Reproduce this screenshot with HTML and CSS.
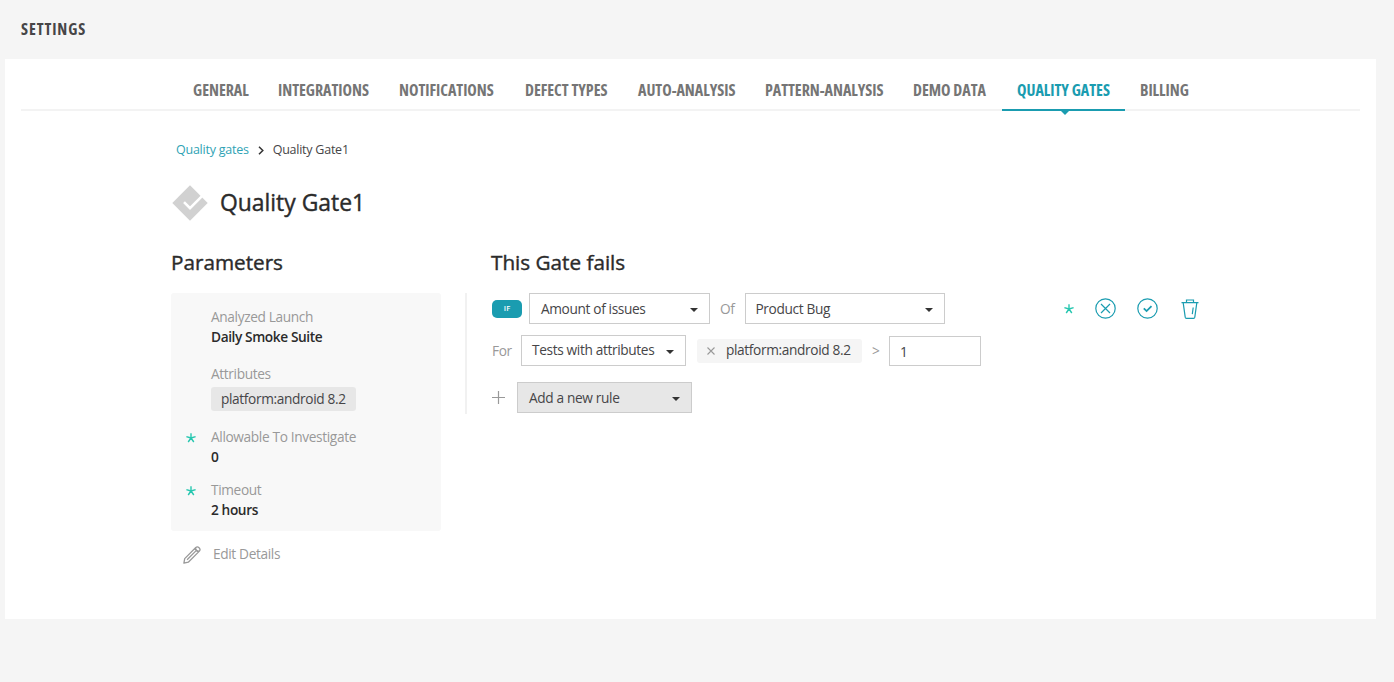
FILE: index.html
```html
<!DOCTYPE html>
<html lang="en">
<head>
<meta charset="utf-8">
<title>Settings</title>
<link rel="stylesheet" href="styles.css">
</head>
<body>
<header class="header">SETTINGS</header>
<main class="panel">
  <nav class="tabs">
    <a class="tab w-general"><span>GENERAL</span></a>
    <a class="tab w-integrations"><span>INTEGRATIONS</span></a>
    <a class="tab w-notifications"><span>NOTIFICATIONS</span></a>
    <a class="tab w-defects"><span>DEFECT TYPES</span></a>
    <a class="tab w-auto"><span>AUTO-ANALYSIS</span></a>
    <a class="tab w-pattern"><span>PATTERN-ANALYSIS</span></a>
    <a class="tab w-demo"><span>DEMO DATA</span></a>
    <a class="tab w-gates active"><span>QUALITY GATES</span></a>
    <a class="tab w-billing"><span>BILLING</span></a>
  </nav>
  <div class="content">
    <div class="crumbs">
      <a class="crumb-link">Quality gates</a>
      <svg class="crumb-arrow" width="6" height="9" viewBox="0 0 6 9"><path d="M1 .8 4.8 4.5 1 8.2" fill="none" stroke="#333" stroke-width="1.5"/></svg>
      <span>Quality Gate1</span>
    </div>
    <div class="title-row">
      <svg width="36" height="36" viewBox="0 0 36 36"><path d="M18 .3 35.7 18 18 35.7.3 18Z" fill="#d1d1d1"/><path d="M12 17.2 18 23.2 30.5 10.700" fill="none" stroke="#fff" stroke-width="2.600"/></svg>
      <h1>Quality Gate1</h1>
    </div>
    <div class="columns">
      <section class="params">
        <h2>Parameters</h2>
        <div class="card">
          <div class="param"><div class="label">Analyzed Launch</div><div class="value">Daily Smoke Suite</div></div>
          <div class="param attrs"><div class="label">Attributes</div><span class="chip">platform:android 8.2</span></div>
          <div class="param invest"><svg class="star" width="10" height="10" viewBox="0 0 10 10"><path d="M5 5V.2M5 5 .4 3.600M5 5 9.600 3.600M5 5 2.200 9M5 5 7.800 9"/></svg><div class="label">Allowable To Investigate</div><div class="value">0</div></div>
          <div class="param timeout"><svg class="star" width="10" height="10" viewBox="0 0 10 10"><path d="M5 5V.2M5 5 .4 3.600M5 5 9.600 3.600M5 5 2.200 9M5 5 7.800 9"/></svg><div class="label">Timeout</div><div class="value">2 hours</div></div>
        </div>
        <div class="edit">
          <svg width="18" height="18" viewBox="0 0 18 18" fill="none" stroke="#999" stroke-width="1.300" stroke-linejoin="round"><path d="M.9 17.100 1.700 12.600 12.800 1.500C14.800-.3 18.300 2.800 16.400 5.100L5.300 16.200ZM11.600 2.700 15.200 6.300M12.800 1.500C12.100 3.500 14.300 5.800 16.400 5.100M4.100 13.700 13.400 4.400"/></svg>
          <span>Edit Details</span>
        </div>
      </section>
      <section class="gate">
        <h2>This Gate fails</h2>
        <div class="rules">
          <div class="row first">
            <span class="if">IF</span>
            <div class="select amount"><span>Amount of issues</span><i class="caret"></i></div>
            <span class="word of">Of</span>
            <div class="select product"><span>Product Bug</span><i class="caret"></i></div>
            <div class="actions">
              <svg class="star" width="10" height="10" viewBox="0 0 10 10"><path d="M5 5V.2M5 5 .4 3.600M5 5 9.600 3.600M5 5 2.200 9M5 5 7.800 9"/></svg>
              <svg class="act cancel" width="21" height="21" viewBox="0 0 21 21"><circle cx="10.500" cy="10.500" r="9.700"/><path d="M6 6l9 9M15 6l-9 9"/></svg>
              <svg class="act ok" width="21" height="21" viewBox="0 0 21 21"><circle cx="10.500" cy="10.500" r="9.700"/><path d="M6.800 10.300 9.600 13.100 14.500 8.200" stroke-width="1.800"/></svg>
              <svg class="act trash" width="18" height="20" viewBox="0 0 18 20"><path d="M.5 3.700H17.500M5.500 3.500V1H12.500V3.500M2.200 3.900 4.200 18.200Q4.400 19.300 5.400 19.300H12.600Q13.600 19.300 13.800 18.200L15.800 3.900M12.200 8.500 11.300 15.200"/></svg>
            </div>
          </div>
          <div class="row second">
            <span class="word for">For</span>
            <div class="select tests"><span>Tests with attributes</span><i class="caret"></i></div>
            <div class="tag"><svg width="8" height="8" viewBox="0 0 8 8"><path d="M.5.5l7 7M7.500.5l-7 7" stroke="#999" stroke-width="1.100"/></svg><span>platform:android 8.2</span></div>
            <span class="gt">&gt;</span>
            <div class="number">1</div>
          </div>
          <div class="row third">
            <svg width="13" height="13" viewBox="0 0 13 13"><path d="M6.500 0v13M0 6.500h13" stroke="#999" stroke-width="1.200"/></svg>
            <div class="select add"><span>Add a new rule</span><i class="caret"></i></div>
          </div>
        </div>
      </section>
    </div>
  </div>
</main>
</body>
</html>
```

FILE: styles.css
```css
* { box-sizing: border-box; }
body { margin: 0; height: 682px; background: #f5f5f5; color: #464547; font: 13.7px/20px "Open Sans", sans-serif; letter-spacing: -0.36px; overflow: hidden; }
h1, h2 { margin: 0; font-weight: 400; letter-spacing: 0; color: #2b2b2b; -webkit-text-stroke: 0.4px #2b2b2b; }
svg { display: block; flex: none; }
.header { height: 59px; padding: 19px 0 0 21px; font-size: 16px; line-height: 21px; font-weight: 700; font-stretch: 75%; letter-spacing: 0.9px; }
.panel { width: 1371px; height: 560px; margin-left: 5px; padding: 0 16px; background: #fff; }
.tabs { display: flex; height: 52px; padding: 16px 0 0 157px; border-bottom: 2px solid #f3f3f3; }
.tab { position: relative; flex: none; height: 36px; padding: 4px 15px 0; font-size: 16px; line-height: 22px; font-weight: 700; font-stretch: 75%; letter-spacing: -0.03px; color: #757575; white-space: nowrap; }
.w-general { width: 85px; }
.w-integrations { width: 121px; }
.w-notifications { width: 126px; }
.w-defects { width: 113px; }
.w-auto { width: 127px; }
.w-pattern { width: 148px; }
.w-demo { width: 104px; }
.w-gates { width: 123px; }
.w-billing { width: 80px; }
.active { color: #1a9cb0; border-bottom: 2px solid #1a9cb0; }
.active::after { content: ""; position: absolute; left: 58px; top: 35px; border: 5px solid transparent; border-top: 5px solid #1a9cb0; border-bottom: 0; }
.content { padding: 29px 0 0 150px; }
.crumbs { display: flex; align-items: center; height: 20px; padding: 0 0 0 5px; font-size: 12.5px; letter-spacing: -0.24px; }
.crumb-link { color: #2fa3b5; }
.crumb-arrow { margin: 0 9px; }
.title-row { display: flex; align-items: center; gap: 12px; height: 40px; margin: 23px 0 0 1px; }
h1 { font-size: 22.9px; line-height: 30px; }
.columns { display: flex; margin-top: 25px; }
h2 { height: 45px; font-size: 20.7px; line-height: 28px; }
.params { width: 294px; }
.card { width: 270px; height: 238px; padding: 14px 0 0 40px; background: #f8f8f8; border-radius: 3px; }
.param { position: relative; }
.param .star { position: absolute; left: -25px; top: 6px; }
.label { color: #999; }
.value { font-weight: 600; letter-spacing: -0.4px; color: #2b2b2b; }
.attrs { margin-top: 17px; }
.chip { display: block; width: 145px; height: 24px; margin-top: 3px; padding-left: 10px; line-height: 23px; background: #e7e7e7; border-radius: 3px; }
.invest { margin-top: 16px; }
.timeout { margin-top: 13px; }
.star { fill: none; stroke: #27c7b0; stroke-width: 1.4; }
.edit { display: flex; align-items: center; gap: 12px; margin: 13px 0 0 12px; color: #999; }
.edit svg { margin-top: 2px; }
.gate { width: 740px; }
.gate h2 { padding-left: 26px; }
.rules { height: 121px; padding-left: 25px; border-left: 2px solid #f1f1f1; }
.row { display: flex; align-items: center; height: 31px; }
.second { margin-top: 11px; }
.third { margin-top: 16px; }
.select { display: flex; flex: none; align-items: center; justify-content: space-between; height: 31px; padding: 0 11px; border: 1px solid #ccc; background: #fff; white-space: nowrap; }
.caret { width: 8px; height: 4px; border: 4px solid transparent; border-top: 4px solid #333; border-bottom: 0; margin-top: 2px; }
.if { width: 30px; height: 18px; margin: 1px 7px 0 0; border-radius: 5px; background: #1a9cb0; color: #fff; font-size: 7.5px; font-weight: 600; letter-spacing: 0; line-height: 17px; text-align: center; }
.amount { width: 181px; }
.product { width: 200px; padding-left: 9.5px; }
.word { flex: none; color: #999; padding-top: 1px; }
.of { width: 35px; padding-left: 10px; }
.for { width: 29px; }
.tests { width: 165px; padding-left: 10px; }
.tests span { margin-top: -2px; }
.tag { display: flex; align-items: center; gap: 11px; width: 165px; height: 24px; margin-left: 11px; padding-left: 10px; background: #f5f5f5; border-radius: 3px; white-space: nowrap; }
.tag span { margin-top: -1px; }
.gt { width: 27px; padding-left: 10px; color: #999; }
.number { width: 92px; height: 30px; padding-left: 10px; line-height: 29px; border: 1px solid #ccc; }
.third .select { margin-left: 12px; }
.add { width: 175px; background: #e7e7e7; }
.actions { display: flex; align-items: center; margin-left: 119px; }
.act { fill: none; stroke: #1a9cb0; stroke-width: 1.2; }
.cancel { margin-left: 21px; }
.ok { margin-left: 21px; }
.trash { margin-left: 23px; }
```
